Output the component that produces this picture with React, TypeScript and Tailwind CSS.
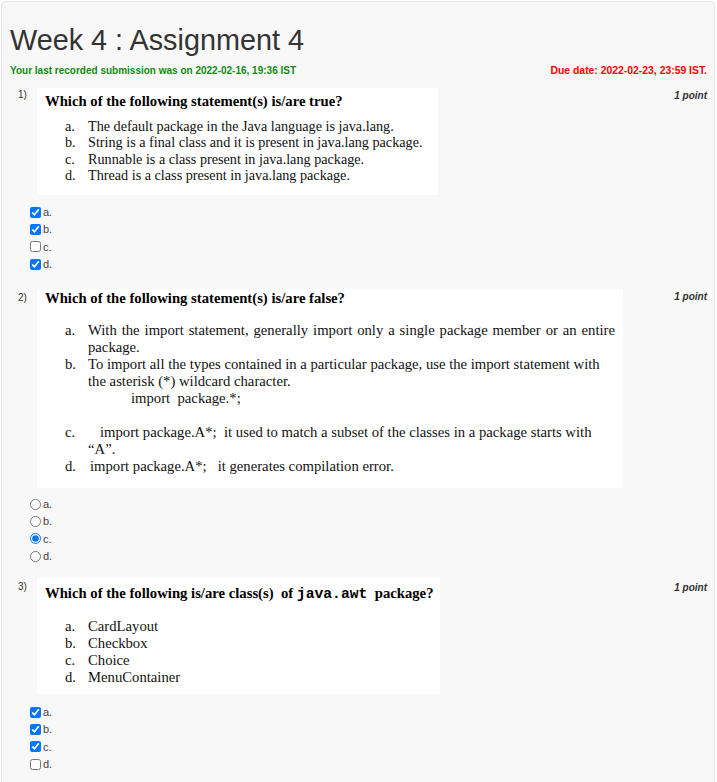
import type { ReactNode } from "react";

const serif = "font-['Liberation_Serif','Times_New_Roman',serif]";

type Mark = { label: string; on: boolean };

function Choices({ kind, marks, className }: { kind: "checkbox" | "radio"; marks: Mark[]; className: string }) {
  return (
    <div className={className}>
      {marks.map((m) => (
        <label key={m.label} className="flex h-[17.3px] items-center pl-[20px]">
          <input
            type={kind}
            readOnly
            checked={m.on}
            className="m-0 h-[11px] w-[11px] accent-[#0075ff]"
          />
          <span className="ml-[2px] text-[11px] text-[#444]">{m.label}</span>
        </label>
      ))}
    </div>
  );
}

function Opt({ mark, children }: { mark: string; children: ReactNode }) {
  return (
    <div className="flex">
      <span className="w-[23px] shrink-0">{mark}</span>
      <span>{children}</span>
    </div>
  );
}

function QuestionRow({
  num,
  numTop,
  pointTop,
  children,
}: {
  num: string;
  numTop: string;
  pointTop: string;
  children: ReactNode;
}) {
  return (
    <div className="flex items-start">
      <span className={`ml-[8px] w-[19px] shrink-0 text-[10px] leading-[12px] text-[#333] ${numTop}`}>{num}</span>
      <div className="flex-1">{children}</div>
      <span className={`shrink-0 text-[10px] font-bold italic leading-[12px] text-[#333] ${pointTop}`}>1 point</span>
    </div>
  );
}

export default function App() {
  return (
    <div className="min-h-screen bg-white pl-px pr-[2px] pt-px font-['Liberation_Sans',Arial,sans-serif]">
      <div className="rounded-[4px] border border-[#e4e4e4] bg-[#f8f8f8] pb-10 pl-[8px] pr-[7px] pt-[22px]">
        <h1 className="text-[28.8px] leading-[32px] text-[#333]">Week 4 : Assignment 4</h1>
        <div className="mt-[8px] flex items-center justify-between font-bold leading-[14px]">
          <span className="text-[10px] text-[#118a11]">Your last recorded submission was on 2022-02-16, 19:36 IST</span>
          <span className="text-[10.4px] text-[#ff0000]">Due date: 2022-02-23, 23:59 IST.</span>
        </div>

        {/* question 1 */}
        <div className="mt-[10px]">
          <QuestionRow num="1)" numTop="pt-[1px]" pointTop="pt-[2px]">
            <div className={`w-[401px] bg-white pb-[12px] pl-[8px] pt-[5px] text-black ${serif}`}>
              <p className="text-[14.7px] font-bold leading-[16px]">Which of the following statement(s) is/are true?</p>
              <div className="mt-[9px] pl-[20px] text-[14.2px] leading-[16.3px] text-[#111]">
                <Opt mark="a.">The default package in the Java language is java.lang.</Opt>
                <Opt mark="b.">String is a final class and it is present in java.lang package.</Opt>
                <Opt mark="c.">Runnable is a class present in java.lang package.</Opt>
                <Opt mark="d.">Thread is a class present in java.lang package.</Opt>
              </div>
            </div>
          </QuestionRow>
          <Choices
            kind="checkbox"
            className="mt-[8.4px]"
            marks={[
              { label: "a.", on: true },
              { label: "b.", on: true },
              { label: "c.", on: false },
              { label: "d.", on: true },
            ]}
          />
        </div>

        {/* question 2 */}
        <div className="mt-[16.4px]">
          <QuestionRow num="2)" numTop="pt-[3px]" pointTop="pt-[2px]">
            <div className={`w-[586px] bg-white pb-[13.5px] pl-[8px] pt-[1px] text-black ${serif}`}>
              <p className="text-[14.7px] font-bold leading-[16px]">Which of the following statement(s) is/are false?</p>
              <div className="mt-[15.5px] pl-[20px] text-[14.7px] leading-[17px] text-[#111]">
                <Opt mark="a.">
                  <span className="block w-[527px] text-justify [text-align-last:justify]">
                    With the import statement, generally import only a single package member or an entire
                  </span>
                  <span className="block">package.</span>
                </Opt>
                <Opt mark="b.">
                  <span className="block whitespace-nowrap">To import all the types contained in a particular package, use the import statement with</span>
                  <span className="block">the asterisk (*) wildcard character.</span>
                  <span className="block whitespace-pre pl-[43px]">import  package.*;</span>
                </Opt>
                <div className="h-[17px]" />
                <Opt mark="c.">
                  <span className="block whitespace-pre pl-[12px]">import package.A*;  it used to match a subset of the classes in a package starts with</span>
                  <span className="block">“A”.</span>
                </Opt>
                <Opt mark="d.">
                  <span className="block whitespace-pre pl-[2px]">import package.A*;   it generates compilation error.</span>
                </Opt>
              </div>
            </div>
          </QuestionRow>
          <Choices
            kind="radio"
            className="mt-[7.4px]"
            marks={[
              { label: "a.", on: false },
              { label: "b.", on: false },
              { label: "c.", on: true },
              { label: "d.", on: false },
            ]}
          />
        </div>

        {/* question 3 */}
        <div className="mt-[12.4px]">
          <QuestionRow num="3)" numTop="pt-[4px]" pointTop="pt-[5px]">
            <div className={`w-[403px] bg-white pb-[8.5px] pl-[8px] pt-[8px] text-black ${serif}`}>
              <p className="whitespace-pre text-[14.7px] font-bold leading-[16px]">
                Which of the following is/are class(s)  of <span className="font-['Liberation_Mono','Courier_New',monospace]">java.awt</span>  package?
              </p>
              <div className="mt-[15.5px] pl-[20px] text-[14.7px] leading-[17px] text-[#111]">
                <Opt mark="a.">CardLayout</Opt>
                <Opt mark="b.">Checkbox</Opt>
                <Opt mark="c.">Choice</Opt>
                <Opt mark="d.">MenuContainer</Opt>
              </div>
            </div>
          </QuestionRow>
          <Choices
            kind="checkbox"
            className="mt-[9.4px]"
            marks={[
              { label: "a.", on: true },
              { label: "b.", on: true },
              { label: "c.", on: true },
              { label: "d.", on: false },
            ]}
          />
        </div>
      </div>
    </div>
  );
}
